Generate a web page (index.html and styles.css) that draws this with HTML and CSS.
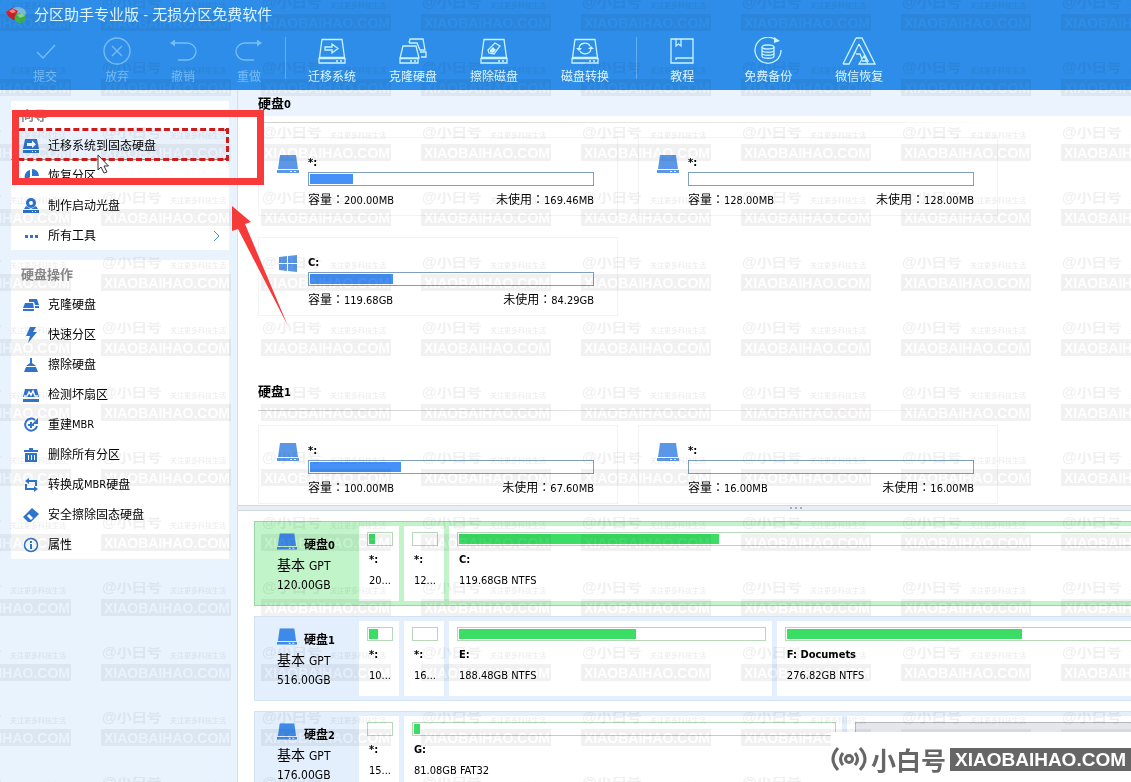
FILE: index.html
```
<!DOCTYPE html>
<html lang="zh-CN">
<head>
<meta charset="utf-8">
<title>分区助手专业版 - 无损分区免费软件</title>
<link rel="stylesheet" href="styles.css">
</head>
<body>
<svg class="defs" aria-hidden="true">
  <symbol id="disk" viewBox="0 0 22 18"><path d="M3 0h16l2 14H1z"/><path d="M0 15h22v3H0z"/><path d="M13 16h2v1h-2zM17 16h2v1h-2z" fill="#fff"/></symbol>
  <symbol id="drive" viewBox="0 0 28 28"><path d="M4 2.500h20l2.500 18h-25zM1 21.500h26v4.500H1zM18 24h2M22 24h2"/></symbol>
</svg>

<header class="top">
  <div class="title">
    <svg class="logo" viewBox="0 0 20 17" aria-hidden="true"><ellipse cx="12" cy="6" rx="8" ry="6" fill="#7fb6dc"/><path d="M0 5l6-4 6 3-2 4 2 4-5 1-5-4z" fill="#d3202c"/><path d="M3 4l4-2 3 3-4 1z" fill="#f08a80"/><ellipse cx="14" cy="11" rx="5.500" ry="5" fill="#3fb54a"/><path d="M11 8l5-2 3 3-5 2z" fill="#8ee08a"/></svg>
    <h1>分区助手专业版 - 无损分区免费软件</h1>
  </div>
  <nav class="toolbar">
    <div class="group">
      <button disabled><svg viewBox="0 0 28 28"><path d="M6 15l6 6L24 8"/></svg>提交</button>
      <button class="apart" disabled><svg viewBox="0 0 28 28"><circle cx="14" cy="14" r="13"/><path d="M9 9l10 10M19 9L9 19"/></svg>放弃</button>
      <button disabled><svg viewBox="0 0 28 28"><path d="M3 6h15c5 0 9 4 9 8.500S23 23 18 23H9"/><path class="solid" d="M1 6l5-3.500v7z"/></svg>撤销</button>
      <button disabled><svg viewBox="0 0 28 28"><path d="M25 6H10c-5 0-9 4-9 8.500S5 23 10 23h9"/><path class="solid" d="M27 6l-5-3.500v7z"/></svg>重做</button>
    </div>
    <div class="group">
      <button><svg viewBox="0 0 28 28"><use href="#drive"/><path d="M7 10h7V7l6 4.500-6 4.500v-3H7z"/></svg>迁移系统</button>
      <button><svg viewBox="0 0 28 28"><path d="M4 9h13l3 12H1zM1 21.500h18V26H1zM11 24h2M15 24h2M10 6l1-4h13l2 11h-5L18 6h-8M21 15h6v5h-5"/></svg>克隆硬盘</button>
      <button><svg viewBox="0 0 28 28"><use href="#drive"/><path d="M8 13l7-7 5 3-6 8-5-1z"/><path class="solid" d="M10 13l3-3 3 3-3 3-3-1z"/></svg>擦除磁盘</button>
      <button class="further"><svg viewBox="0 0 28 28"><use href="#drive"/><path d="M8 11c1-6 9-6 11-2M20 12c-1 6-9 6-11 2"/><path class="solid" d="M5 11h6l-3 3zM17 12h6l-3-3z"/></svg>磁盘转换</button>
    </div>
    <div class="group last">
      <button><svg viewBox="0 0 28 28"><path d="M3 2h22v24H3zM8 2v7l2.500-2L13 9V2M25 21H8v2"/></svg>教程</button>
      <button class="further"><svg viewBox="0 0 28 28"><path d="M22 3A13 13 0 1 0 27 13M8 10v9c0 3 12 3 12 0v-9M8 13c0 3 12 3 12 0M8 16c0 3 12 3 12 0"/><ellipse cx="14" cy="10" rx="6" ry="2"/><path class="solid" d="M20 0l6 4-6 2z"/></svg>免费备份</button>
      <button><svg viewBox="0 0 34 28"><path d="M14 1h6l13 26H17l5-8 4 8M1 27h6l7-13M1 27L14 1M17 7L7 27M17 7l9 17h-6M14 17l4 0 2 5"/></svg>微信恢复</button>
    </div>
  </nav>
</header>

<div class="body">
  <aside class="side">
    <section class="panel">
      <h2>向导</h2>
      <button class="item current"><svg viewBox="0 0 16 16"><path d="M2 1h12l2 10H0zM0 12h16v3H0z"/><path d="M4 5h5V2.500L13 6.500 9 10V8H4zM9 13h1v1H9zM12 13h1v1h-1z" fill="#fff"/></svg>迁移系统到固态硬盘</button>
      <button class="item"><svg viewBox="0 0 16 16"><path d="M7 2v7l-4 4a7 7 0 0 1 4-11zM9 1a7 7 0 0 1 7 7H9zM15 10a7 7 0 0 1-10 4l4-4z"/></svg>恢复分区</button>
      <button class="item"><svg viewBox="0 0 16 16"><circle cx="8" cy="5" r="5"/><circle cx="8" cy="5" r="2" fill="#fff"/><path d="M3 8l-2 3h14l-2-3-5 3zM0 12h16v3H0z"/><path d="M9 13h1v1H9zM12 13h1v1h-1z" fill="#fff"/></svg>制作启动光盘</button>
      <button class="item"><svg viewBox="0 0 16 16"><path d="M2 7h3v3H2zM7 7h3v3H7zM12 7h3v3h-3z"/></svg>所有工具<svg class="chevron" viewBox="0 0 8 12"><path d="M1 1l5 5-5 5"/></svg></button>
    </section>
    <section class="panel">
      <h2>硬盘操作</h2>
      <button class="item"><svg viewBox="0 0 16 16"><path d="M2 6h8l1 5H0zM0 12h11v2H0zM6 5V2h8l2 6h-4l-1-3zM12 9h4v2h-4z"/></svg>克隆硬盘</button>
      <button class="item"><svg viewBox="0 0 16 16"><path d="M7 0h6L10 5h4L5 16l2-7H3z"/></svg>快速分区</button>
      <button class="item"><svg viewBox="0 0 16 16"><path d="M7 1h2v5l4 3H3l4-3zM3 10h10l2 5H1z"/></svg>擦除硬盘</button>
      <button class="item"><svg viewBox="0 0 16 16"><path d="M2 2h12l2 8H0zM0 12h16v3H0z"/><path d="M1 9h3l2-4 2 3 2-4 2 5h3" fill="none" stroke="#fff" stroke-width="1.500"/></svg>检测坏扇区</button>
      <button class="item"><svg viewBox="0 0 16 16"><path d="M12 3a6 6 0 1 0 2 6M8 5v6M5 8h6" fill="none" stroke="#2f74cc" stroke-width="2"/><path d="M15 1v6H9z"/></svg>重建<span class="latin">MBR</span></button>
      <button class="item"><svg viewBox="0 0 16 16"><path d="M6 1h4v2h5v2H1V3h5zM2 6h12v9H2z"/><path d="M5 8h1v5H5zM8 8h1v5H8zM11 8h1v5h-1z" fill="#fff"/></svg>删除所有分区</button>
      <button class="item"><svg viewBox="0 0 16 16"><path d="M5 4h8v5M11 12H3V7" fill="none" stroke="#2f74cc" stroke-width="2"/><path d="M2 4l4-3v6zM15 12l-4-3v6z"/></svg>转换成<span class="latin">MBR</span>硬盘</button>
      <button class="item"><svg viewBox="0 0 16 16"><path d="M9 1l7 6-8 8H5L0 10z"/><path d="M4 9l2-2 4 4-2 2z" fill="#fff"/></svg>安全擦除固态硬盘</button>
      <button class="item"><svg viewBox="0 0 16 16"><circle cx="8" cy="8" r="6.500" fill="none" stroke="#2f74cc" stroke-width="1.500"/><path d="M7 7h2v5H7zM7 4h2v2H7z"/></svg>属性</button>
    </section>
  </aside>

  <main class="main">
    <section class="volumes">
      <h2>硬盘<span class="latin">0</span></h2>
      <div class="cards">
        <article class="card"><svg class="icon" viewBox="0 0 22 18"><use href="#disk"/></svg>
          <div class="info"><h3>*:</h3><div class="bar"><div class="fill" style="width:15.400%"></div></div>
          <p lang="zh-TW"><span>容量：<b>200.00MB</b></span><span>未使用：<b>169.46MB</b></span></p></div></article>
        <article class="card"><svg class="icon" viewBox="0 0 22 18"><use href="#disk"/></svg>
          <div class="info"><h3>*:</h3><div class="bar"></div>
          <p lang="zh-TW"><span>容量：<b>128.00MB</b></span><span>未使用：<b>128.00MB</b></span></p></div></article>
        <article class="card"><svg class="icon" viewBox="0 0 22 18"><path d="M2 2l8-1v7H2zM11 1l9-1v8h-9zM2 9h8v7l-8-1zM11 9h9v8l-9-1z"/></svg>
          <div class="info"><h3>C:</h3><div class="bar"><div class="fill" style="width:29.500%"></div></div>
          <p lang="zh-TW"><span>容量：<b>119.68GB</b></span><span>未使用：<b>84.29GB</b></span></p></div></article>
      </div>
      <h2>硬盘<span class="latin">1</span></h2>
      <div class="cards">
        <article class="card"><svg class="icon" viewBox="0 0 22 18"><use href="#disk"/></svg>
          <div class="info"><h3>*:</h3><div class="bar"><div class="fill" style="width:32.400%"></div></div>
          <p lang="zh-TW"><span>容量：<b>100.00MB</b></span><span>未使用：<b>67.60MB</b></span></p></div></article>
        <article class="card"><svg class="icon" viewBox="0 0 22 18"><use href="#disk"/></svg>
          <div class="info"><h3>*:</h3><div class="bar"></div>
          <p lang="zh-TW"><span>容量：<b>16.00MB</b></span><span>未使用：<b>16.00MB</b></span></p></div></article>
      </div>
    </section>

    <div class="splitter"><i></i><i></i><i></i></div>

    <section class="disks">
      <div class="disk selected">
        <div class="about"><div class="name"><svg viewBox="0 0 22 18"><use href="#disk"/></svg><h3>硬盘<span class="latin">0</span></h3></div><p>基本 <span>GPT</span></p><p><span>120.00GB</span></p></div>
        <div class="part small"><div class="bar"><div class="fill" style="width:28%"></div></div><h4>*:</h4><p>20...</p></div>
        <div class="part small"><div class="bar"></div><h4>*:</h4><p>12...</p></div>
        <div class="part rest"><div class="bar"><div class="fill" style="width:38.300%"></div></div><h4>C:</h4><p>119.68GB NTFS</p></div>
      </div>
      <div class="disk">
        <div class="about"><div class="name"><svg viewBox="0 0 22 18"><use href="#disk"/></svg><h3>硬盘<span class="latin">1</span></h3></div><p>基本 <span>GPT</span></p><p><span>516.00GB</span></p></div>
        <div class="part small"><div class="bar"><div class="fill" style="width:40%"></div></div><h4>*:</h4><p>10...</p></div>
        <div class="part small"><div class="bar"></div><h4>*:</h4><p>16...</p></div>
        <div class="part" style="width:36.400%"><div class="bar"><div class="fill" style="width:58%"></div></div><h4>E:</h4><p>188.48GB NTFS</p></div>
        <div class="part rest"><div class="bar"><div class="fill" style="width:67%"></div></div><h4>F: Documets</h4><p>276.82GB NTFS</p></div>
      </div>
      <div class="disk">
        <div class="about"><div class="name"><svg viewBox="0 0 22 18"><use href="#disk"/></svg><h3>硬盘<span class="latin">2</span></h3></div><p>基本 <span>GPT</span></p><p><span>176.00GB</span></p></div>
        <div class="part small"><div class="bar"></div><h4>*:</h4><p>15...</p></div>
        <div class="part" style="width:49.400%"><div class="bar"><div class="fill" style="width:1.500%"></div></div><h4>G:</h4><p>81.08GB FAT32</p></div>
        <div class="part rest"><div class="bar free"></div></div>
      </div>
    </section>
  </main>
</div>

<svg class="watermark" aria-hidden="true">
  <defs>
    <pattern id="mark" x="101" y="-3" width="160" height="65" patternUnits="userSpaceOnUse">
      <text class="wm-name" x="1" y="10">@小白号</text>
      <text class="wm-note" x="69" y="11">关注更多科技生活</text>
      <rect x="0" y="17" width="130" height="17" fill="#f1f1f1"/>
      <text class="wm-site" x="3" y="31">XIAOBAIHAO.COM</text>
    </pattern>
  </defs>
  <rect width="100%" height="100%" fill="url(#mark)"/>
</svg>

<div class="frame"></div>
<div class="dashes"></div>
<svg class="arrow" viewBox="0 0 56 120" aria-hidden="true"><path d="M0 0l19 16-6 2 43 102L6 23l-6 2z" fill="#f53a3a"/></svg>
<svg class="cursor" viewBox="0 0 12 20" aria-hidden="true"><path d="M1 1v15l3-3 3 6 3-1-3-6h4.500z" fill="#fff" stroke="#333"/></svg>

<footer class="stamp">
  <svg viewBox="0 0 36 26" aria-hidden="true"><circle cx="18" cy="13" r="3.500"/><path d="M12 7q-5 6 0 12M24 7q5 6 0 12M7 2q-10 11 0 22M29 2q10 11 0 22"/></svg>
  <span class="brand">小白号</span>
  <span class="site">XIAOBAIHAO.COM</span>
</footer>
</body>
</html>
```
FILE: styles.css
```
* { box-sizing: border-box; }
body {
  margin: 0;
  height: 100vh;
  overflow: hidden;
  display: flex;
  flex-direction: column;
  position: relative;
  background: #fff;
  color: #000;
  font: 12px/18px "DejaVu Sans Condensed", "Noto Sans CJK SC", sans-serif;
}
h1, h2, h3, h4, p { margin: 0; }
button {
  border: 0;
  padding: 0;
  background: none;
  color: inherit;
  font: inherit;
}
.defs { position: absolute; width: 0; height: 0; }
.latin { font-size: 11px; }

/* Title and toolbar */
.top {
  height: 90px;
  flex: none;
  background: #2d8de8;
  color: #e0f8ff;
}
.title { display: flex; align-items: center; gap: 8px; height: 30px; padding-left: 6px; }
.logo { width: 20px; height: 17px; }
.title h1 { font-family: "Liberation Sans", "Noto Sans CJK SC", sans-serif; font-size: 15px; font-weight: 400; line-height: 28px; }
.toolbar { display: flex; padding: 7px 0 0 33px; }
.group {
  display: flex;
  gap: 42px;
  height: 42px;
  padding-right: 24px;
  margin-right: 22px;
  border-right: 1px solid #62aef2;
  align-items: flex-start;
}
.group + .group { gap: 33px; padding-right: 27px; margin-right: 33px; }
.group.last { border: 0; gap: 43px; }
.apart { margin-left: 6px; }
.further { margin-left: 10px; }
.last .further { margin-left: 7px; }
.toolbar button { display: flex; flex-direction: column; align-items: center; min-width: 24px; white-space: nowrap; }
.toolbar svg { width: 28px; height: 28px; margin: 0 -2px 3px; fill: none; stroke: #c9f3ff; stroke-width: 1.300; }
.toolbar .last button:last-child svg { width: 34px; }
.toolbar .solid { fill: #c9f3ff; stroke: none; }
.toolbar button:disabled { color: #78bdf5; }
.toolbar button:disabled svg { stroke: #78bdf5; }
.toolbar button:disabled .solid { fill: #78bdf5; }

/* Sidebar */
.body { flex: 1; min-height: 0; display: flex; }
.side {
  width: 238px;
  flex: none;
  padding: 11px 8px 0 11px;
  display: flex;
  flex-direction: column;
  gap: 10px;
  background: #e9f3fe;
  border-right: 1px solid #d5dfec;
}
.panel { background: #fff; display: flex; flex-direction: column; }
.panel h2 { height: 29px; padding-left: 10px; font-size: 13px; line-height: 30px; color: #8a8a8a; }
.item { display: flex; align-items: center; height: 30px; padding: 2px 8px 0 12px; text-align: left; }
.item svg { width: 16px; height: 16px; margin-right: 9px; fill: #2f74cc; }
.item .chevron { width: 8px; height: 12px; margin: 0 0 0 auto; fill: none; stroke: #4a8fd8; }
.current { background: #e9f2fc; box-shadow: inset 0 -1px #6ba0dd; }

/* Volume cards */
.main { flex: 1; min-width: 0; display: flex; flex-direction: column; }
.volumes {
  flex: 411 1 0;
  min-height: 0;
  overflow: hidden;
  padding: 4px 0 0 20px;
  background: linear-gradient(#ebf4fe 26px, #fff 26px);
}
.volumes h2 {
  font-size: 13px;
  line-height: 20px;
  height: 29px;
  margin-bottom: 14px;
  background: linear-gradient(90deg, #cfcfcf, #f4eeee 80%, #fff) 0 100% / 740px 1px no-repeat;
}
.cards { display: grid; grid-template-columns: repeat(auto-fill, 360px); gap: 21px 20px; }
.cards + h2 { margin-top: 66px; }
.card { display: flex; gap: 9px; height: 79px; border: 1px solid #f3f3f3; padding: 15px 23px 0 18px; }
.icon { width: 22px; height: 18px; margin-top: 2px; flex: none; fill: #5b97e6; }
.info { flex: 1; }
.info h3 { font-size: 11px; line-height: 19px; }
.info p { display: flex; justify-content: space-between; line-height: 18px; margin-top: 5px; font-family: "DejaVu Sans Condensed", "Noto Sans CJK TC", sans-serif; }
.info b { font-size: 11px; font-weight: 400; }
.bar { height: 14px; padding: 1px; border: 1px solid #7f9fbf; background: #fff; }
.fill { height: 100%; background: #4591f7; }

.splitter {
  height: 6px;
  flex: none;
  display: flex;
  justify-content: center;
  align-items: center;
  gap: 3px;
  padding-left: 222px;
  background: #eaedf6;
  border: solid #d2d7e4;
  border-width: 1px 0;
}
.splitter i { width: 2px; height: 2px; background: #a8acb5; }

/* Disk map */
.disks {
  flex: 261 1 0;
  min-height: 0;
  overflow: hidden;
  padding: 10px 0 0 16px;
  display: flex;
  flex-direction: column;
  gap: 10px;
}
.disk {
  display: flex;
  flex: none;
  gap: 5px;
  height: 85px;
  margin-right: -20px;
  padding: 4px;
  border: 1px solid #d3e2f4;
  background: #e3effd;
}
.disk.selected { background: #c1f4c9; border-color: #9bd5a5; }
.about { width: 95px; flex: none; padding: 7px 0 0 18px; }
.name { display: flex; gap: 7px; height: 22px; }
.name svg { width: 20px; height: 17px; fill: #3f8ae8; }
.name h3 { font-size: 12px; line-height: 24px; white-space: nowrap; }
.about p { font-size: 14px; line-height: 20px; height: 19px; white-space: nowrap; }
.about p span { font-size: 12px; }
.part { background: #fff; padding: 6px 6px 0 8px; flex: none; white-space: nowrap; }
.small { width: 40px; }
.rest { flex: 1; }
.part .bar { border-color: #b4d8b8; }
.part .fill { background: #3cdd64; }
.part h4 { font-size: 11px; line-height: 18px; margin-top: 5px; padding-left: 2px; }
.part p { font-size: 11px; line-height: 18px; margin-top: 3px; padding-left: 2px; }
.part .free { background: #e4e6ec; border-color: #b5b8bf; }

/* Overlays */
.watermark { position: absolute; inset: 0; width: 100%; height: 100%; pointer-events: none; mix-blend-mode: multiply; }
.wm-name { font: 700 15px "Liberation Sans", "Noto Sans CJK SC", sans-serif; fill: #f0f0f0; }
.wm-note { font: 7px "Noto Sans CJK SC", sans-serif; fill: #ebebeb; }
.wm-site { font: 700 14px "Liberation Sans", sans-serif; fill: #fff; }
.frame { position: absolute; left: 12px; top: 110px; width: 252px; height: 75px; border: 7px solid #f83a3a; }
.dashes { position: absolute; left: 19px; top: 128px; width: 210px; height: 33px; border: 3px dashed #cb1c1c; border-left: 0; border-radius: 1px; }
.arrow { position: absolute; left: 232px; top: 206px; width: 56px; height: 120px; }
.cursor { position: absolute; left: 97px; top: 154px; width: 12px; height: 20px; }
.stamp {
  position: absolute;
  right: 0;
  bottom: 0;
  display: flex;
  align-items: center;
  gap: 4px;
  height: 50px;
  padding-top: 4px;
  background: #fff;
  color: #666;
}
.stamp svg { width: 36px; height: 26px; fill: none; stroke: #666; stroke-width: 3; }
.brand { font: 700 25px/26px "Noto Sans CJK SC", sans-serif; }
.site { padding: 0 5px; background: #666; color: #fff; font: 700 19px/23px "Liberation Sans", sans-serif; }
```
